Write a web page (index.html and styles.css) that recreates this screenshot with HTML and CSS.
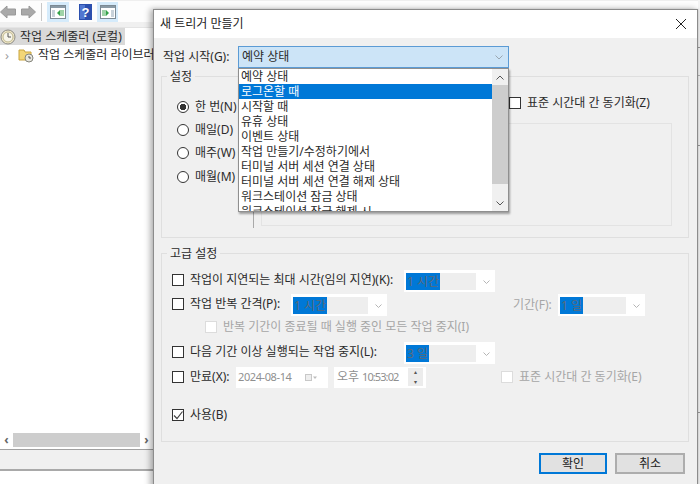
FILE: index.html
```html
<!DOCTYPE html>
<html lang="ko">
<head>
<meta charset="utf-8">
<title>새 트리거 만들기</title>
<link rel="stylesheet" href="styles.css">
</head>
<body>
<div class="app">
  <div class="toolbar">
    <svg class="tool-arrow" width="16" height="14" viewBox="0 0 16 14"><path d="M.5 7 7 1v3h8.500v6H7v3z" fill="#a9a9a9" stroke="#999"/></svg>
    <svg class="tool-arrow" width="15" height="14" viewBox="0 0 15 14"><path d="M14.500 7 8 1v3H.5v6H8v3z" fill="#a9a9a9" stroke="#999"/></svg>
    <span class="tool-sep"></span>
    <span class="tool-btn on">
      <svg width="16" height="14" viewBox="0 0 16 14"><rect x=".5" y=".5" width="15" height="13" fill="#fff" stroke="#7c8a94"/><rect x="1" y="1" width="14" height="2" fill="#8a9aa6"/><rect x="2" y="5" width="3" height="7" fill="#c8d2da"/><path d="M10 5v6L7 8z" fill="#35a34a"/><rect x="10" y="5" width="4" height="6" fill="#9fd3a8"/></svg>
    </span>
    <svg class="tool-help" width="13" height="16" viewBox="0 0 13 16"><rect width="13" height="16" fill="#2b4fae"/><rect x="1" y="1" width="5" height="14" fill="#5177d0"/><text x="6.500" y="13" class="help-mark">?</text></svg>
    <span class="tool-btn on last">
      <svg width="16" height="14" viewBox="0 0 16 14"><rect x=".5" y=".5" width="15" height="13" fill="#fff" stroke="#7c8a94"/><rect x="1" y="1" width="14" height="2" fill="#8a9aa6"/><rect x="11" y="5" width="3" height="7" fill="#c8d2da"/><path d="M6 5v6l3-3z" fill="#35a34a"/><rect x="2" y="5" width="4" height="6" fill="#9fd3a8"/></svg>
    </span>
  </div>
  <div class="tool-band"></div>
  <div class="tree">
    <div class="tree-row root">
      <svg width="16" height="16" viewBox="0 0 16 16"><circle cx="8" cy="8" r="7" fill="#efe6c8" stroke="#8d8d86"/><circle cx="8" cy="8" r="5" fill="#f7f5ea" stroke="#c0b98f"/><path d="M8 4v4h3" fill="none" stroke="#555"/></svg>
      <span>작업 스케줄러 (로컬)</span>
    </div>
    <div class="tree-row child">
      <span class="chev">›</span>
      <svg width="16" height="16" viewBox="0 0 16 16"><path d="M1 3h5l1 2h6v8H1z" fill="#f3d677" stroke="#c9a43e"/><circle cx="11" cy="11" r="4" fill="#e7e7e0" stroke="#85857c"/><path d="M11 9v2h2" fill="none" stroke="#555"/></svg>
      <span>작업 스케줄러 라이브러리</span>
    </div>
  </div>
  <div class="hscroll">
    <span class="hs-arrow">‹</span>
    <span class="hs-thumb"></span>
    <span class="hs-arrow">›</span>
  </div>
  <div class="status"></div>
</div>
<div class="edge"></div>

<div class="dialog">
  <div class="titlebar">
    <span>새 트리거 만들기</span>
    <svg width="10" height="10" viewBox="0 0 10 10"><path d="M0 0 10 10M10 0 0 10" stroke="#222" fill="none"/></svg>
  </div>
  <div class="content">
    <div class="start-row">
      <span class="start-label">작업 시작(G):</span>
      <div class="start-combo">
        <div class="start-value">
          <span>예약 상태</span>
          <svg width="8" height="5" viewBox="0 0 8 5"><path d="M.5.5 4 4 7.500.5" fill="none" stroke="#9aa6b0"/></svg>
        </div>
        <div class="popup">
          <ul class="popup-list">
            <li>예약 상태</li>
            <li class="selected">로그온할 때</li>
            <li>시작할 때</li>
            <li>유휴 상태</li>
            <li>이벤트 상태</li>
            <li>작업 만들기/수정하기에서</li>
            <li>터미널 서버 세션 연결 상태</li>
            <li>터미널 서버 세션 연결 해제 상태</li>
            <li>워크스테이션 잠금 상태</li>
            <li>워크스테이션 잠금 해제 시</li>
          </ul>
          <div class="popup-scroll">
            <span class="ps-btn"><svg width="8" height="5" viewBox="0 0 8 5"><path d="M.5 4.500 4 1l3.500 3.500" fill="none" stroke="#555"/></svg></span>
            <span class="ps-thumb"></span>
            <span class="ps-gap"></span>
            <span class="ps-btn"><svg width="8" height="5" viewBox="0 0 8 5"><path d="M.5.5 4 4 7.500.5" fill="none" stroke="#555"/></svg></span>
          </div>
        </div>
      </div>
    </div>

    <section class="group settings">
      <h2 class="legend">설정</h2>
      <div class="settings-body">
        <div class="radios">
          <label class="radio-row"><span class="radio checked"></span>한 번(N)</label>
          <label class="radio-row"><span class="radio"></span>매일(D)</label>
          <label class="radio-row"><span class="radio"></span>매주(W)</label>
          <label class="radio-row"><span class="radio"></span>매월(M)</label>
        </div>
        <div class="vline"></div>
        <div class="settings-right">
          <div class="sync-row"><span class="check"></span>표준 시간대 간 동기화(Z)</div>
          <div class="inner-box"></div>
        </div>
      </div>
    </section>

    <section class="group advanced">
      <h2 class="legend">고급 설정</h2>
      <div class="adv-row raised r1">
        <span class="check"></span><span class="adv-label w1">작업이 지연되는 최대 시간(임의 지연)(K):</span>
        <span class="combo c91"><span class="combo-field"><span class="sel">1 시간</span></span><svg width="7" height="4" viewBox="0 0 7 4"><path d="M.5.5 3.500 3.500 6.500.5" fill="none" stroke="#b5b5b5"/></svg></span>
      </div>
      <div class="adv-row raised r2">
        <span class="check"></span><span class="adv-label w2">작업 반복 간격(P):</span>
        <span class="combo c96"><span class="combo-field"><span class="sel">1 시간</span></span><svg width="7" height="4" viewBox="0 0 7 4"><path d="M.5.5 3.500 3.500 6.500.5" fill="none" stroke="#b5b5b5"/></svg></span>
        <span class="adv-label off period">기간(F):</span>
        <span class="combo c87"><span class="combo-field"><span class="sel">1 일</span></span><svg width="7" height="4" viewBox="0 0 7 4"><path d="M.5.5 3.500 3.500 6.500.5" fill="none" stroke="#b5b5b5"/></svg></span>
      </div>
      <div class="adv-row r3">
        <span class="check off"></span><span class="adv-label off">반복 기간이 종료될 때 실행 중인 모든 작업 중지(I)</span>
      </div>
      <div class="adv-row raised r4">
        <span class="check"></span><span class="adv-label w1">다음 기간 이상 실행되는 작업 중지(L):</span>
        <span class="combo c91"><span class="combo-field"><span class="sel">3 일</span></span><svg width="7" height="4" viewBox="0 0 7 4"><path d="M.5.5 3.500 3.500 6.500.5" fill="none" stroke="#b5b5b5"/></svg></span>
      </div>
      <div class="adv-row r5">
        <span class="check"></span><span class="adv-label w5">만료(X):</span>
        <span class="field date">2024-08-14<svg width="12" height="7" viewBox="0 0 12 7"><rect x=".5" y=".5" width="6" height="6" fill="#eee" stroke="#c8c8c8"/><path d="M8 2.500h4L10 5z" fill="#bdbdbd"/></svg></span>
        <span class="field time"><span class="ampm">오후</span><span class="clock">10:53:02</span><span class="spin"><i>▴</i><i>▾</i></span></span>
        <span class="check off"></span><span class="adv-label off">표준 시간대 간 동기화(E)</span>
      </div>
      <div class="adv-row r6">
        <span class="check"><svg width="10" height="10" viewBox="0 0 10 10"><path d="M1 5.500 4 8.500 9.500 1.500" fill="none" stroke="#444" stroke-width="1.200"/></svg></span><span class="adv-label">사용(B)</span>
      </div>
    </section>

    <div class="buttons">
      <button class="btn primary" type="button">확인</button>
      <button class="btn" type="button">취소</button>
    </div>
  </div>
</div>
</body>
</html>
```

FILE: styles.css
```css
* { box-sizing: border-box; }
html, body { margin: 0; padding: 0; }
body {
  position: relative;
  width: 700px;
  height: 484px;
  overflow: hidden;
  background: #fff;
  font-family: "Noto Sans", "Noto Sans CJK KR", sans-serif;
  font-size: 12px;
  line-height: 16px;
  color: #2a2a2a;
}

/* Background application */
.app { display: flex; flex-direction: column; width: 700px; height: 484px; }
.toolbar { display: flex; align-items: center; height: 22px; padding-top: 1px; background: #fdfdfd; border-top: 1px solid #efefef; }
.tool-arrow { margin-right: 5px; }
.tool-sep { width: 1px; height: 18px; margin-right: 5px; background: #c8c8c8; }
.tool-btn { display: flex; align-items: center; justify-content: center; width: 22px; height: 20px; }
.tool-btn.on { background: #d5ebfb; }
.tool-btn.last { width: 21px; margin-left: 5px; }
.tool-help { margin-left: 10px; }
.help-mark { fill: #fff; font: bold 13px "Liberation Sans", sans-serif; text-anchor: middle; }
.tool-band { height: 6px; background: #f0f0f0; border-bottom: 1px solid #e4e4e4; }
.tree { flex: 1; min-height: 0; }
.tree-row { display: flex; align-items: center; height: 17px; }
.tree-row.root { width: 125px; background: #d9d9d9; gap: 4px; }
.tree-row.child { padding-left: 5px; margin-top: 1px; }
.chev { width: 13px; color: #a0a0a0; font-size: 13px; }
.tree-row.child span:last-child { margin-left: 4px; white-space: nowrap; }
.hscroll { display: flex; align-items: center; width: 155px; height: 14px; color: #666; }
.hs-arrow { width: 13px; text-align: center; font-weight: bold; }
.hs-thumb { width: 127px; height: 14px; background: #cdcdcd; }
.status { height: 22px; margin: 2px 0 13px; background: #f0f0f0; border-top: 1px solid #a0a0a0; border-bottom: 2px solid #a9a9a9; }
.edge {
  position: absolute;
  right: 0;
  top: 0;
  width: 2px;
  height: 484px;
  background:
    linear-gradient(#9a9a9a, #9a9a9a) 0 47px / 2px 1px no-repeat,
    linear-gradient(#b5b5b5, #b5b5b5) 0 75px / 2px 1px no-repeat,
    linear-gradient(#9a9a9a, #9a9a9a) 0 145px / 2px 1px no-repeat,
    linear-gradient(#9a9a9a, #9a9a9a) 0 412px / 2px 1px no-repeat,
    #f4f4f4;
}

/* Dialog window */
.dialog {
  position: absolute;
  left: 153px;
  top: 9px;
  width: 545px;
  height: 480px;
  border: 1px solid #8c8c8c;
  background: #f0f0f0;
  box-shadow: -3px 0 6px rgba(0, 0, 0, .3), 1px 0 2px rgba(0, 0, 0, .12);
}
.titlebar { display: flex; align-items: center; justify-content: space-between; height: 28px; padding: 0 11px 0 6px; background: #fff; color: #222; }
.content { padding: 8px 7px 0 7px; }
.start-row { display: flex; align-items: center; height: 22px; }
.start-label { width: 77px; padding-left: 2px; }
.start-combo { position: relative; width: 271px; }
.start-value { display: flex; align-items: center; justify-content: space-between; height: 22px; padding: 0 5px 0 3px; background: #cce4f7; border: 1px solid #5b9bd5; }
.popup { position: absolute; left: 0; top: 22px; display: flex; width: 271px; height: 144px; background: #fff; border: 1px solid #8f8f8f; box-shadow: 1px 2px 2px rgba(0, 0, 0, .35); z-index: 2; }
.popup-list { flex: 1; margin: 0; padding: 0; list-style: none; overflow: hidden; }
.popup-list li { height: 15px; padding-left: 2px; line-height: 15px; white-space: nowrap; }
.popup-list .selected { background: #0078d7; color: #fff; }
.popup-scroll { display: flex; flex-direction: column; width: 16px; background: #f0f0f0; }
.ps-btn { display: flex; align-items: center; justify-content: center; height: 16px; }
.ps-thumb { height: 99px; background: #cdcdcd; }
.ps-gap { flex: 1; }

.group { position: relative; width: 528px; margin-top: 8px; border: 1px solid #dfdfdf; }
.legend { width: fit-content; height: 18px; margin: -9px 0 0 5px; padding: 0 3px; background: #f0f0f0; font-size: 12px; font-weight: normal; line-height: 18px; }
.settings { height: 162px; }
.settings-body { display: flex; height: 143px; }
.radios { display: flex; flex-direction: column; width: 91px; padding: 9px 0 0 15px; }
.radio-row { display: flex; align-items: center; height: 23.400px; gap: 6px; white-space: nowrap; }
.radio { flex: none; width: 12px; height: 12px; border: 1px solid #333; border-radius: 50%; background: #fff; }
.radio.checked { background: radial-gradient(circle, #333 0 3px, #fff 3.500px); }
.vline { width: 1px; height: 133px; margin-top: 9px; background: #a9a9a9; }
.settings-right { display: flex; flex-direction: column; flex: 1; padding-left: 7px; }
.sync-row { display: flex; align-items: center; height: 18px; margin-top: 8px; padding-left: 248px; gap: 6px; white-space: nowrap; }
.inner-box { width: 411px; height: 103px; margin-top: 11px; border: 1px solid #e3e3e3; }

.check { display: inline-flex; flex: none; align-items: center; justify-content: center; width: 12px; height: 12px; border: 1px solid #333; background: #fff; }
.check.off { border-color: #dcdcdc; }

.advanced { height: 189px; margin-top: 15px; padding-left: 10px; }
.advanced .legend { margin-left: -5px; }
.adv-row { display: flex; align-items: center; height: 22px; white-space: nowrap; }
.adv-label { margin-left: 6px; }
.adv-label.off { color: #a6a6a6; }
.raised > .check, .raised > .adv-label { margin-bottom: 3px; }
.raised > .period { margin-bottom: 0; }
.w1 { width: 214px; }
.w2 { width: 101px; }
.w5 { width: 46px; }
.r1 { margin-top: 7px; }
.r2 { margin-top: 2px; }
.r3 { height: 12px; margin-top: 5px; padding-left: 33px; }
.r4 { margin-top: 9px; }
.r5 { margin-top: 2px; }
.r5 > .check, .r5 > .adv-label { margin-bottom: 1px; }
.r6 { height: 12px; margin-top: 21px; }
.period { width: 45px; margin-left: 126px; }
.combo { display: flex; align-items: center; justify-content: space-between; height: 22px; padding: 3px 4px 2px 2px; background: #fff; }
.combo svg { margin-right: 1px; }
.c91 { width: 91px; }
.c96 { width: 96px; }
.c87 { width: 87px; }
.combo-field { display: flex; flex: 1; height: 17px; margin-right: 7px; background: #eee; }
.sel { height: 17px; padding: 0 1px; background: #0078d7; color: #5d6a78; line-height: 17px; }
.field { display: flex; align-items: center; height: 21px; padding: 0 3px 0 2px; background: #fff; color: #8f8f8f; }
.date { justify-content: space-between; width: 92px; margin-right: 6px; padding-right: 11px; font-size: 11px; letter-spacing: -.4px; }
.time { width: 92px; margin-right: 75px; }
.ampm { width: 26px; padding-left: 1px; }
.clock { flex: 1; font-size: 11px; letter-spacing: -.9px; }
.spin { display: flex; flex-direction: column; width: 15px; height: 18px; background: #ececec; gap: 1px; }
.spin i { height: 8.500px; font-size: 6px; font-style: normal; line-height: 8px; text-align: center; color: #555; }

.buttons { display: flex; width: 530px; margin-top: 11px; padding-left: 378px; gap: 8px; }
.btn { width: 70px; height: 21px; padding: 0; border: 2px solid #adadad; background: #e1e1e1; font: inherit; color: #222; }
.btn.primary { width: 68px; border-color: #0078d7; }
```
